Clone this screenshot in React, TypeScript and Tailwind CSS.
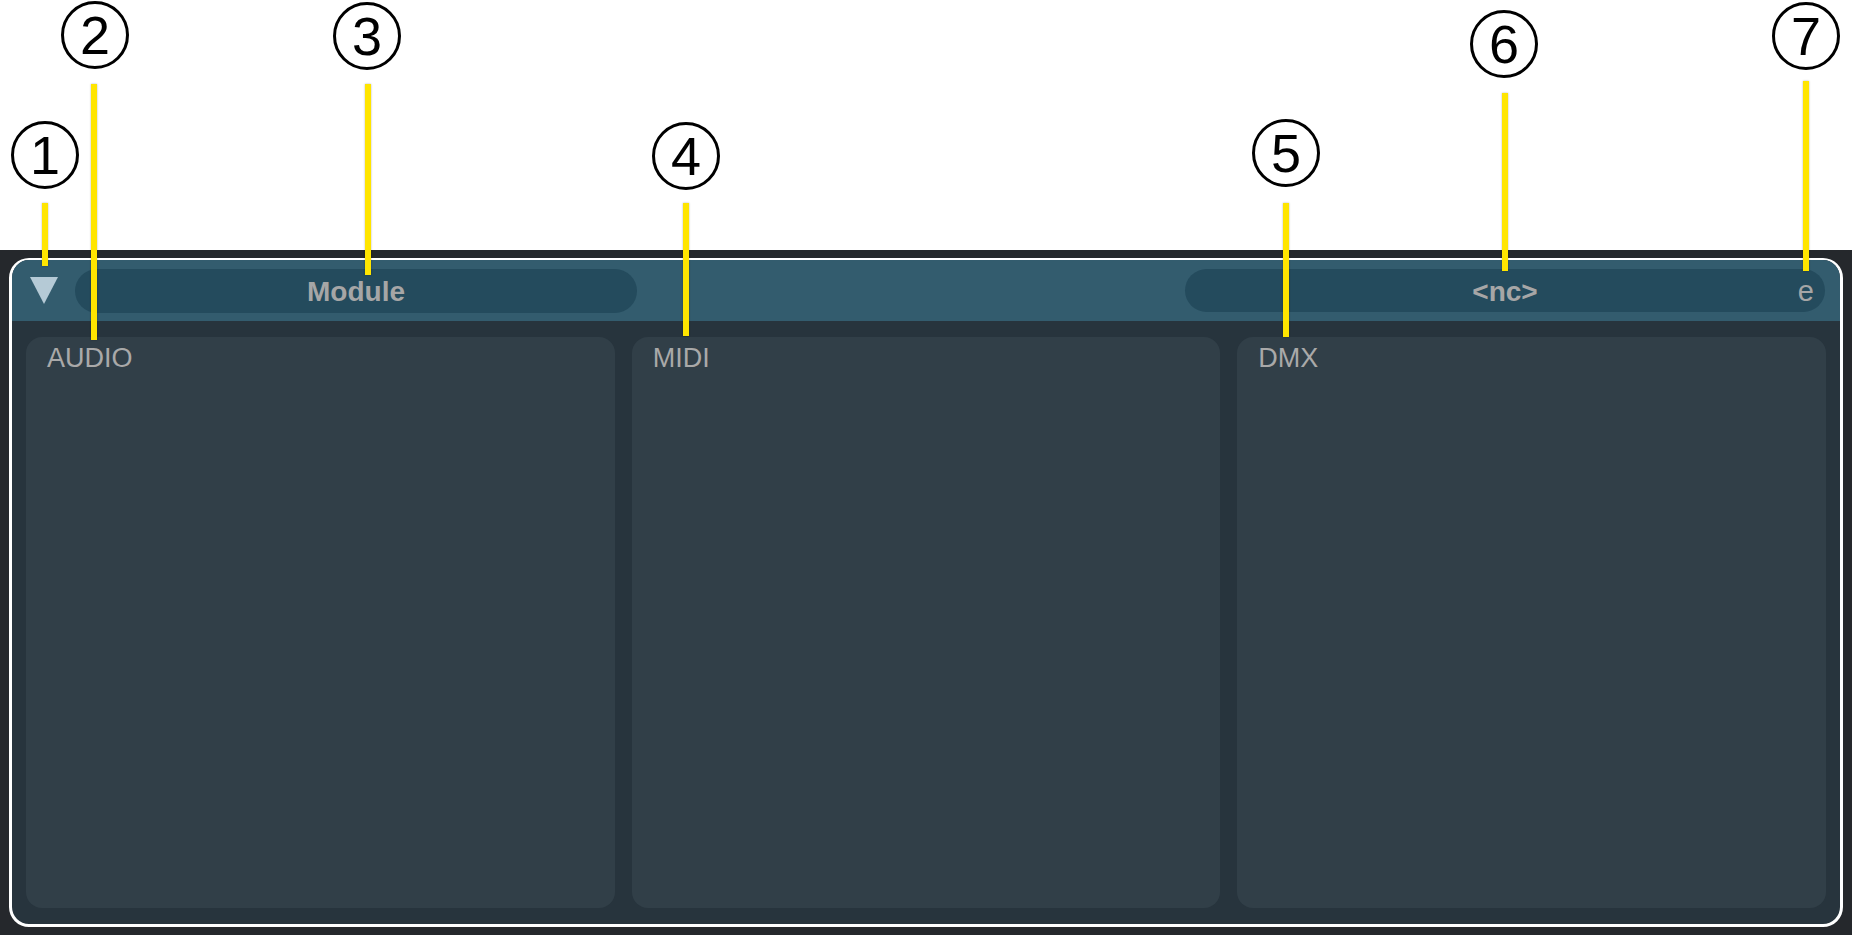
import React from 'react';

type Callout = { n: string; cx: number; cy: number; x: number; top: number; bottom: number };

const callouts: Callout[] = [
  { n: '1', cx: 45, cy: 155, x: 45, top: 203, bottom: 266 },
  { n: '2', cx: 95, cy: 35, x: 94, top: 84, bottom: 340 },
  { n: '3', cx: 367, cy: 36, x: 368, top: 84, bottom: 275 },
  { n: '4', cx: 686, cy: 156, x: 686, top: 203, bottom: 336 },
  { n: '5', cx: 1286, cy: 153, x: 1286, top: 203, bottom: 337 },
  { n: '6', cx: 1504, cy: 44, x: 1505, top: 93, bottom: 271 },
  { n: '7', cx: 1806, cy: 36, x: 1806, top: 81, bottom: 271 },
];

function Card({ label }: { label: string }) {
  return (
    <div className="flex-1 rounded-[16px] bg-[#313f48] pl-[21px] pt-[5px]">
      <span className="text-[27px] leading-[32px] text-[#a9a9a9]">{label}</span>
    </div>
  );
}

export default function App() {
  return (
    <div className="relative w-[1852px] h-[935px] overflow-hidden bg-white font-['Liberation_Sans',Arial,sans-serif]">
      <div className="h-[250px]" />
      <div className="h-[685px] bg-[#25282c] pt-[8px] px-[9px] pb-[8px]">
        <div className="h-full flex flex-col overflow-hidden rounded-[20px] border-[3px] border-t-2 border-white bg-[#27343d]">
          {/* header */}
          <div className="h-[61px] shrink-0 flex items-center bg-[#335c6e] pl-[18px] pr-[15px]">
            <svg width="28" height="27" viewBox="0 0 28 27" className="shrink-0">
              <polygon points="0,0 28,0 14,27" fill="#b5cad6" />
            </svg>
            <div className="ml-[17px] w-[562px] h-[44px] rounded-full bg-[#244b5d] flex items-center justify-center">
              <span className="mt-[2px] text-[28px] font-bold text-[#a6a6a6] leading-none">Module</span>
            </div>
            <div className="flex-1" />
            <div className="relative w-[640px] h-[43px] rounded-full bg-[#244b5d] flex items-center justify-center">
              <span className="mt-[2px] text-[28px] font-bold text-[#a6a6a6] leading-none">&lt;nc&gt;</span>
              <span className="absolute right-[11px] top-[8px] text-[29px] text-[#a6a6a6] leading-none">e</span>
            </div>
          </div>
          {/* body */}
          <div className="flex-1 flex gap-[17px] px-[14px] pt-[16px] pb-[16px]">
            <Card label="AUDIO" />
            <Card label="MIDI" />
            <Card label="DMX" />
          </div>
        </div>
      </div>

      {/* callout annotations */}
      {callouts.map((c) => (
        <React.Fragment key={c.n}>
          <div
            className="absolute w-[6px] bg-[#ffe500] shadow-[0_0_2px_rgba(0,0,0,0.35)]"
            style={{ left: c.x - 3, top: c.top, height: c.bottom - c.top }}
          />
          <div
            className="absolute w-[68px] h-[68px] rounded-full border-[3.5px] border-black bg-white flex items-center justify-center"
            style={{ left: c.cx - 34, top: c.cy - 34 }}
          >
            <span className="font-['Liberation_Sans',sans-serif] text-[54px] leading-none text-black">{c.n}</span>
          </div>
        </React.Fragment>
      ))}
    </div>
  );
}
